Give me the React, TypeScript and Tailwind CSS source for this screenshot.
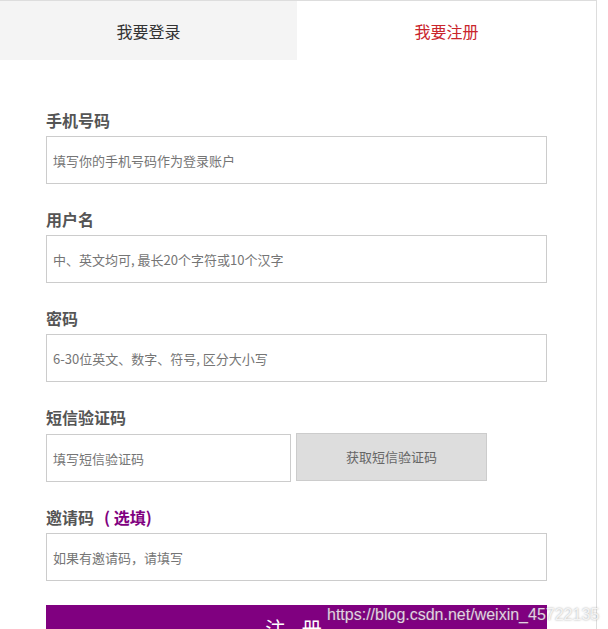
import React from 'react';

const font = "font-['Microsoft_YaHei','Noto_Sans_CJK_SC',sans-serif]";

const Field = ({ label, placeholder }: { label: React.ReactNode; placeholder: string }) => (
  <div className="mb-[23px]">
    <div className="h-[24px] leading-[24px] text-[16px] font-bold text-[#555] mb-[4px]">{label}</div>
    <input
      className="block w-[501px] h-[48px] border border-[#ccc] px-[6px] text-[13px] text-[#555] placeholder:text-[#757575] outline-none"
      placeholder={placeholder}
    />
  </div>
);

export default function App() {
  return (
    <div className={`relative w-[608px] h-[629px] overflow-hidden bg-white ${font}`}>
      <div className="w-[597px] border-t border-r border-[#ddd] min-h-[640px]">
        {/* tabs */}
        <div className="flex h-[59px]">
          <div className="w-[297px] bg-[#f4f4f4] flex items-center justify-center text-[16px] text-[#333]">我要登录</div>
          <div className="flex-1 flex items-center justify-center text-[16px] text-[#c9252c]">我要注册</div>
        </div>

        {/* form */}
        <div className="pl-[46px] pt-[48px]">
          <Field label="手机号码" placeholder="填写你的手机号码作为登录账户" />
          <Field label="用户名" placeholder="中、英文均可, 最长20个字符或10个汉字" />
          <Field label="密码" placeholder="6-30位英文、数字、符号, 区分大小写" />

          <div className="mb-[23px]">
            <div className="h-[24px] leading-[24px] text-[16px] font-bold text-[#555] mb-[5px]">短信验证码</div>
            <div className="flex items-start gap-[5px]">
              <input
                className="block w-[245px] h-[48px] border border-[#ccc] px-[6px] text-[13px] placeholder:text-[#757575] outline-none"
                placeholder="填写短信验证码"
              />
              <button className="w-[191px] h-[48px] -mt-[1px] bg-[#ddd] border border-[#ccc] text-[13px] text-[#666]">
                获取短信验证码
              </button>
            </div>
          </div>

          <Field
            label={
              <>
                邀请码<span className="ml-[10px] text-[#800080]">( 选填)</span>
              </>
            }
            placeholder="如果有邀请码，请填写"
          />

          <button className="w-[501px] h-[48px] mt-[1px] bg-[#800080] text-white text-[20px] tracking-[6px]">
            注 册
          </button>
        </div>
      </div>

      {/* watermark */}
      <div className="absolute left-[327px] top-[603px] text-[16px] text-white/80 font-['Liberation_Sans',Arial,sans-serif] [text-shadow:0_0_2px_rgba(90,90,90,0.6)] whitespace-nowrap">
        https://blog.csdn.net/weixin_45722135
      </div>
    </div>
  );
}
